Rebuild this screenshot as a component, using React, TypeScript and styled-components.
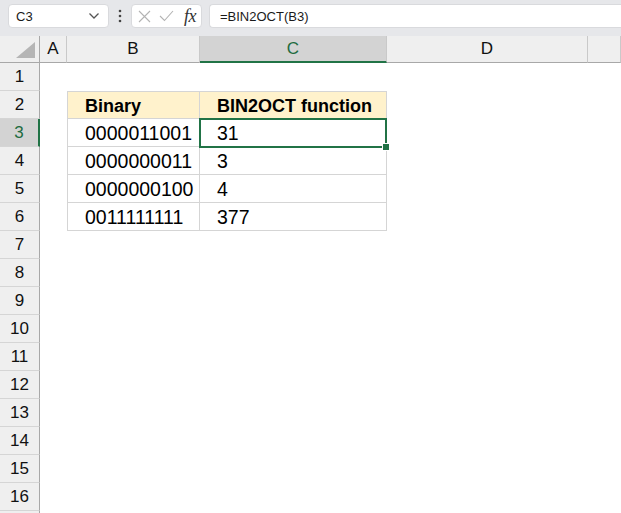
import React from "react";
import styled, { createGlobalStyle, css } from "styled-components";

const GlobalStyle = createGlobalStyle`
  html, body {
    margin: 0;
    padding: 0;
    background: #ffffff;
    overflow: hidden;
  }
  body {
    font-family: "Liberation Sans", Arial, sans-serif;
  }
`;

const Window = styled.div`
  width: 621px;
  height: 513px;
  overflow: hidden;
  background: #ffffff;
`;

const Toolbar = styled.div`
  height: 36px;
  box-sizing: border-box;
  padding: 4px 0 0 8px;
  background: #e6e7ea;
  display: flex;
  align-items: flex-start;
`;

const Box = styled.div`
  height: 24px;
  box-sizing: border-box;
  background: #ffffff;
  border: 1px solid #d9dadd;
  border-radius: 4px;
  display: flex;
  align-items: center;
`;

const NameBox = styled(Box)`
  width: 101px;
  padding: 0 8px 0 7px;
  justify-content: space-between;
  font-size: 13px;
  color: #1a1a1a;
`;

const Dots = styled.div`
  width: 22px;
  height: 24px;
  display: flex;
  align-items: center;
  justify-content: center;
`;

const FnBox = styled(Box)`
  width: 71px;
  padding: 0 4px 0 6px;
  gap: 8px;
`;

const Fx = styled.span`
  font-family: "Liberation Serif", "Times New Roman", serif;
  font-style: italic;
  font-size: 18px;
  color: #333;
  margin-left: 2px;
  letter-spacing: -0.5px;
`;

const FormulaInput = styled(Box)`
  flex: 1;
  margin-left: 7px;
  padding-left: 10px;
  border-right: none;
  border-radius: 4px 0 0 4px;
  font-size: 13px;
  color: #1a1a1a;
`;

const Sheet = styled.div`
  display: grid;
  grid-template-columns: 40px 27px 133px 187px 201px 1fr;
  grid-template-rows: 27px;
  grid-auto-rows: 28px;
`;

const HeadBase = css`
  box-sizing: border-box;
  background: #efefef;
  display: flex;
  align-items: center;
  justify-content: center;
  font-size: 17px;
  color: #111;
`;

const Corner = styled.div`
  ${HeadBase};
  border-right: 1px solid #a8a8a8;
  border-bottom: 1px solid #a8a8a8;
  justify-content: flex-end;
  align-items: flex-end;
  padding: 0 4px 4px 0;
`;

const ColHead = styled.div<{ $selected?: boolean }>`
  ${HeadBase};
  border-right: 1px solid #c9c9c9;
  border-bottom: 1px solid #a8a8a8;
  ${(p) =>
    p.$selected &&
    css`
      background: #d3d3d3;
      border-bottom: 2px solid #217346;
      color: #1e6b40;
    `}
`;

const RowHead = styled.div<{ $selected?: boolean }>`
  ${HeadBase};
  border-right: 1px solid #a8a8a8;
  border-bottom: 1px solid #d5d5d5;
  ${(p) =>
    p.$selected &&
    css`
      background: #d3d3d3;
      border-right: 2px solid #217346;
      color: #1e6b40;
    `}
`;

const Cell = styled.div<{
  $table?: boolean;
  $head?: boolean;
  $top?: boolean;
  $left?: boolean;
  $active?: boolean;
}>`
  position: relative;
  box-sizing: border-box;
  background: #ffffff;
  display: flex;
  align-items: center;
  padding: 2px 0 0 17px;
  font-size: 19.5px;
  color: #000;
  white-space: nowrap;
  ${(p) =>
    p.$table &&
    css`
      border-right: 1px solid #d5d5d5;
      border-bottom: 1px solid #d5d5d5;
    `}
  ${(p) => p.$top && css`border-top: 1px solid #d5d5d5;`}
  ${(p) => p.$left && css`border-left: 1px solid #d5d5d5;`}
  ${(p) =>
    p.$head &&
    css`
      background: #fff2cc;
      font-weight: bold;
      font-size: 18px;
    `}
  ${(p) => p.$active && css`z-index: 2;`}
`;

const Selection = styled.div`
  position: absolute;
  top: -1px;
  left: -1px;
  right: -1px;
  bottom: -2px;
  border: 2px solid #217346;
  pointer-events: none;
`;

const FillHandle = styled.div`
  position: absolute;
  right: -5px;
  bottom: -5px;
  width: 8px;
  height: 8px;
  box-sizing: border-box;
  background: #217346;
  border: 1px solid #ffffff;
`;

const Chevron = () => (
  <svg width="12" height="8" viewBox="0 0 12 8">
    <path d="M1.5 1.5 L6 6 L10.5 1.5" fill="none" stroke="#555" strokeWidth="1.3" />
  </svg>
);

const VDots = () => (
  <svg width="4" height="14" viewBox="0 0 4 14">
    <circle cx="2" cy="2" r="1.3" fill="#444" />
    <circle cx="2" cy="7" r="1.3" fill="#444" />
    <circle cx="2" cy="12" r="1.3" fill="#444" />
  </svg>
);

const Cross = () => (
  <svg width="13" height="13" viewBox="0 0 13 13">
    <path d="M1 1 L12 12 M12 1 L1 12" stroke="#b3b3b3" strokeWidth="1.1" fill="none" />
  </svg>
);

const Check = () => (
  <svg width="15" height="12" viewBox="0 0 15 12">
    <path d="M1 6 L5.5 10.5 L14 1" stroke="#b3b3b3" strokeWidth="1.1" fill="none" />
  </svg>
);

const Triangle = () => (
  <svg width="19" height="16" viewBox="0 0 19 16">
    <polygon points="19,0 19,16 0,16" fill="#b5b5b5" />
  </svg>
);

const columns = ["A", "B", "C", "D", ""];

const tableRows: Record<number, [string, string]> = {
  2: ["Binary", "BIN2OCT function"],
  3: ["0000011001", "31"],
  4: ["0000000011", "3"],
  5: ["0000000100", "4"],
  6: ["0011111111", "377"],
};

// 16 numbered rows plus the sliver of row 17 at the bottom edge
const rows = Array.from({ length: 17 }, (_, i) => i + 1);

export default function App() {
  return (
    <Window>
      <GlobalStyle />
      <Toolbar>
        <NameBox>
          <span>C3</span>
          <Chevron />
        </NameBox>
        <Dots>
          <VDots />
        </Dots>
        <FnBox>
          <Cross />
          <Check />
          <Fx>fx</Fx>
        </FnBox>
        <FormulaInput>=BIN2OCT(B3)</FormulaInput>
      </Toolbar>
      <Sheet>
        <Corner>
          <Triangle />
        </Corner>
        {columns.map((c, i) => (
          <ColHead key={i} $selected={c === "C"}>
            {c}
          </ColHead>
        ))}
        {rows.map((r) => {
          const data = tableRows[r];
          return (
            <React.Fragment key={r}>
              <RowHead $selected={r === 3}>{r <= 16 ? r : ""}</RowHead>
              <Cell />
              {data ? (
                <>
                  <Cell $table $left $top={r === 2} $head={r === 2}>
                    {data[0]}
                  </Cell>
                  <Cell $table $top={r === 2} $head={r === 2} $active={r === 3}>
                    {data[1]}
                    {r === 3 && (
                      <Selection>
                        <FillHandle />
                      </Selection>
                    )}
                  </Cell>
                </>
              ) : (
                <>
                  <Cell />
                  <Cell />
                </>
              )}
              <Cell />
              <Cell />
            </React.Fragment>
          );
        })}
      </Sheet>
    </Window>
  );
}
